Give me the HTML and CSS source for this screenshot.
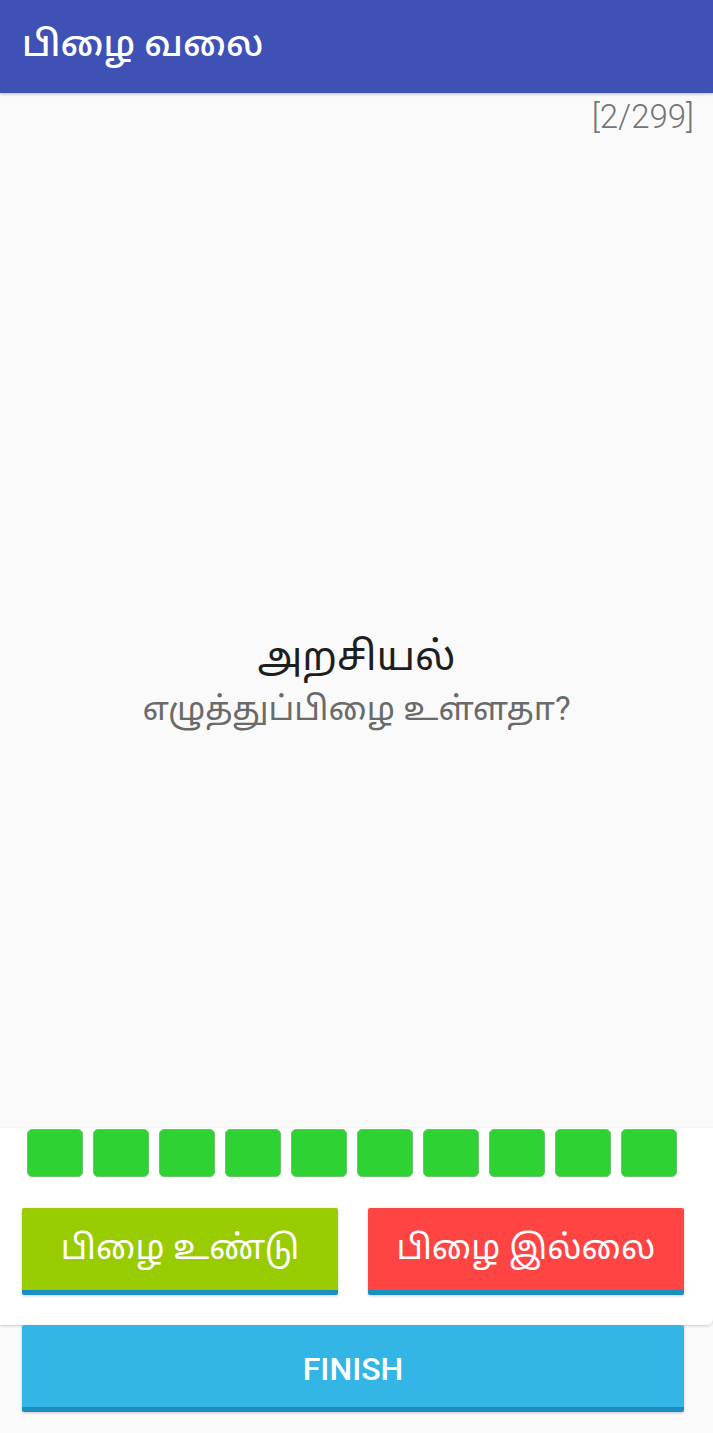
FILE: index.html
```html
<!DOCTYPE html>
<html lang="ta">
<head>
<meta charset="utf-8">
<title>பிழை வலை</title>
<link rel="stylesheet" href="styles.css">
</head>
<body>
<div class="app">
  <header class="appbar">
    <h1 class="title">பிழை வலை</h1>
  </header>
  <main class="content">
    <div class="counter">[2/299]</div>
    <div class="question">
      <div class="word">அறசியல்</div>
      <div class="prompt">எழுத்துப்பிழை உள்ளதா?</div>
    </div>
  </main>
  <section class="panel">
    <div class="progress">
      <span class="cell"></span><span class="cell"></span><span class="cell"></span><span class="cell"></span><span class="cell"></span>
      <span class="cell"></span><span class="cell"></span><span class="cell"></span><span class="cell"></span><span class="cell"></span>
    </div>
    <div class="answers">
      <button class="btn btn-yes">பிழை உண்டு</button>
      <button class="btn btn-no">பிழை இல்லை</button>
    </div>
  </section>
  <div class="footer">
    <button class="btn btn-finish">FINISH</button>
  </div>
</div>
</body>
</html>
```

FILE: styles.css
```css
* { box-sizing: border-box; }
html, body { margin: 0; padding: 0; }
body {
  background: #fafafa;
  font-family: Roboto, "Noto Sans Tamil", "Lohit Tamil", "Noto Sans", sans-serif;
}
.app {
  width: 713px;
  height: 1433px;
  display: flex;
  flex-direction: column;
  overflow: hidden;
}
.appbar {
  height: 93px;
  flex: none;
  background: #3f51b5;
  display: flex;
  align-items: center;
  padding: 0 22px;
  box-shadow: 0 1px 3px rgba(0,0,0,0.25);
  position: relative;
  z-index: 2;
}
.title {
  margin: 0;
  color: #fff;
  font-size: 36px;
  font-weight: 500;
  padding-bottom: 2px;
}
.content {
  flex: 1;
  display: flex;
  flex-direction: column;
}
.counter {
  text-align: right;
  padding: 4px 19px 0 0;
  height: 42px;
  font-size: 33px;
  font-weight: 300;
  color: #757575;
  line-height: 40px;
}
.question {
  flex: 1;
  display: flex;
  flex-direction: column;
  align-items: center;
  justify-content: center;
  padding-top: 100px;
}
.word {
  font-size: 40px;
  color: #1e1e1e;
  line-height: 50px;
}
.prompt {
  font-size: 33px;
  color: #6a6a6a;
  line-height: 46px;
  margin-top: 4px;
}
.panel {
  flex: none;
  height: 197px;
  background: #fff;
  border-radius: 0 0 6px 0;
  box-shadow: 0 1px 3px rgba(0,0,0,0.18);
  padding: 1px 0 0 27px;
}
.progress {
  display: flex;
  gap: 10px;
}
.cell {
  width: 56px;
  height: 48px;
  background: #2ed232;
  border: 1px solid #6cc46e;
  border-radius: 5px;
}
.answers {
  display: flex;
  gap: 30px;
  margin: 31px 0 0 -5px;
}
.btn {
  border: none;
  border-bottom: 5px solid #1a8fc0;
  border-radius: 2px;
  color: #fff;
  font-family: inherit;
  height: 87px;
  padding: 0;
  box-shadow: 0 1px 3px rgba(0,0,0,0.2);
}
.btn-yes, .btn-no {
  width: 316px;
  font-size: 34px;
}
.btn-yes { background: #99cc00; }
.btn-no { background: #ff4444; }
.footer {
  flex: none;
  padding: 0 0 0 22px;
  height: 108px;
}
.btn-finish {
  width: 662px;
  background: #33b5e5;
  font-size: 32px;
  font-weight: 500;
  font-family: Roboto, sans-serif;
  padding-top: 5px;
}
```
